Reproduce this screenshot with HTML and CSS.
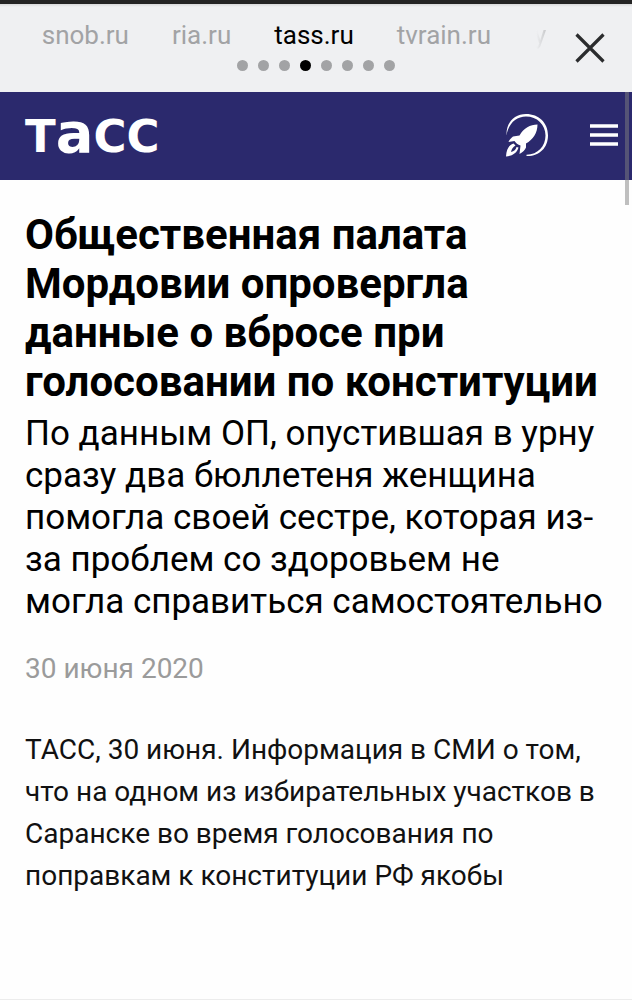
FILE: index.html
```
<!DOCTYPE html>
<html lang="ru">
<head>
<meta charset="utf-8">
<meta name="viewport" content="width=device-width, initial-scale=1">
<title>ТАСС</title>
<link rel="stylesheet" href="styles.css">
</head>
<body>
<div class="viewer">
  <header class="switcher">
    <div class="switcher-main">
      <nav class="sources">
        <a class="source" href="#snob">snob.ru</a>
        <a class="source" href="#ria">ria.ru</a>
        <a class="source active" href="#tass" aria-current="page">tass.ru</a>
        <a class="source" href="#tvrain">tvrain.ru</a>
        <a class="source next" href="#y">y</a>
      </nav>
      <div class="dots">
        <span class="dot"></span><span class="dot"></span><span class="dot"></span><span class="dot current"></span><span class="dot"></span><span class="dot"></span><span class="dot"></span><span class="dot"></span>
      </div>
    </div>
    <button class="close" type="button" aria-label="Закрыть">
      <svg width="30" height="30" viewBox="0 0 30 30"><path d="M1.5 1.5 28.500 28.500M28.500 1.500 1.500 28.500" fill="none" stroke="#2b2c2e" stroke-width="3.200"/></svg>
    </button>
  </header>
  <div class="page">
    <div class="site-bar">
      <a class="logo" href="#home">Т<span class="logo-tall">а</span>СС</a>
      <div class="tools">
        <button class="tool" type="button" aria-label="Лента">
          <svg width="44" height="44" viewBox="0 0 44 44" fill="#fff">
            <path d="M1.500 22.500C1 9 10 1 21 1c13 0 22 9 22 21.500C43 35 34 43.500 21.500 43v-1.200C33 41.500 40.500 33 40.500 22.500 40.500 11.500 32 3.500 21 3.500 11 3.500 3.500 10.500 1.500 22.500Z"/>
            <path d="M32.500 11.500C25 11.500 19 15 14.500 22.500L8 23.500C6 25 4.500 26.500 3.500 29L9.500 28c1 1.500 3.500 4 6 4.500L14.500 41c3.500-2 5.500-4 6.500-6.500V30.500C28 26.500 32.500 20 32.500 11.500Z"/>
            <path d="M8.500 30.500C4 32 1.500 36 1 43.500c6.500-.5 11-3.500 12.500-9l-2-.5c-.5 2.500-2.500 4.500-5.500 5 .5-3 2-5 4.500-6.500Z"/>
          </svg>
        </button>
        <button class="tool" type="button" aria-label="Меню">
          <svg width="28" height="22" viewBox="0 0 28 22"><path d="M0 2h28M0 11h28M0 20h28" stroke="#fff" stroke-width="3.500"/></svg>
        </button>
      </div>
    </div>
    <article class="article">
      <h1 class="title">Общественная палата Мордовии опровергла данные о вбросе при голосовании по конституции</h1>
      <p class="lead">По данным ОП, опустившая в урну сразу два бюллетеня женщина помогла своей сестре, которая из-за проблем со здоровьем не могла справиться самостоятельно</p>
      <time class="date" datetime="2020-06-30">30 июня 2020</time>
      <p class="body-text">ТАСС, 30 июня. Информация в СМИ о том, что на одном из избирательных участков в Саранске во время голосования по поправкам к конституции РФ якобы</p>
    </article>
    <div class="scroll-thumb"></div>
  </div>
</div>
</body>
</html>
```
FILE: styles.css
```
* { box-sizing: border-box; }

body {
  margin: 0;
  background: #fefefe;
  color: #000;
  font-family: Roboto, "Liberation Sans", sans-serif;
}

button {
  padding: 0;
  border: 0;
  background: none;
}

svg { display: block; }

.viewer {
  display: flex;
  flex-direction: column;
  min-height: 100vh;
  border-top: 4px solid #242424;
  border-bottom: 1px solid #ececec;
}

.switcher {
  display: grid;
  grid-template-columns: 57px minmax(0, 1fr) 57px;
  align-items: center;
  height: 88px;
  background: linear-gradient(#d8d9da, #eff0f2 3px);
}

.switcher-main {
  grid-column: 2;
  display: grid;
  grid-template-columns: minmax(0, 1fr);
  justify-items: center;
  gap: 9px;
  padding-bottom: 6px;
}

.sources {
  display: flex;
  gap: 43px;
  padding-right: 44px;
  font-size: 26px;
  line-height: 32px;
}

.source {
  color: #a2a3a5;
  text-decoration: none;
}

.source.active { color: #000; }

.source.next {
  background: linear-gradient(90deg, #eff0f2 20%, #c8c9cb);
  background-clip: text;
  color: transparent;
}

.dots {
  display: flex;
  gap: 10px;
}

.dot {
  width: 11px;
  height: 11px;
  border-radius: 50%;
  background: #a2a3a5;
}

.dot.current { background: #000; }

.close { justify-self: start; }

.page {
  position: relative;
  flex: 1;
}

.site-bar {
  display: flex;
  align-items: center;
  justify-content: space-between;
  height: 88px;
  padding: 0 14px 3px 25px;
  background: #2b296d;
}

.logo {
  color: #fff;
  font: bold 45px/56px "DejaVu Sans", sans-serif;
  text-decoration: none;
}

.logo-tall { font-size: 56px; }

.tools {
  display: flex;
  align-items: center;
  gap: 41px;
}

.article { padding: 30px 25px; }

.title {
  margin: 0;
  font-size: 42px;
  line-height: 49px;
}

.lead {
  margin: 7px 0 0;
  font-size: 35px;
  line-height: 42px;
}

.date {
  display: block;
  margin-top: 30px;
  color: #9b9b9b;
  font-size: 28px;
  line-height: 32px;
}

.body-text {
  margin: 44px 0 0;
  color: #111;
  font-size: 28px;
  line-height: 42px;
}

.scroll-thumb {
  position: absolute;
  top: 0;
  right: 3px;
  width: 4px;
  height: 113px;
  background: rgba(128, 128, 128, 0.5);
}
```
